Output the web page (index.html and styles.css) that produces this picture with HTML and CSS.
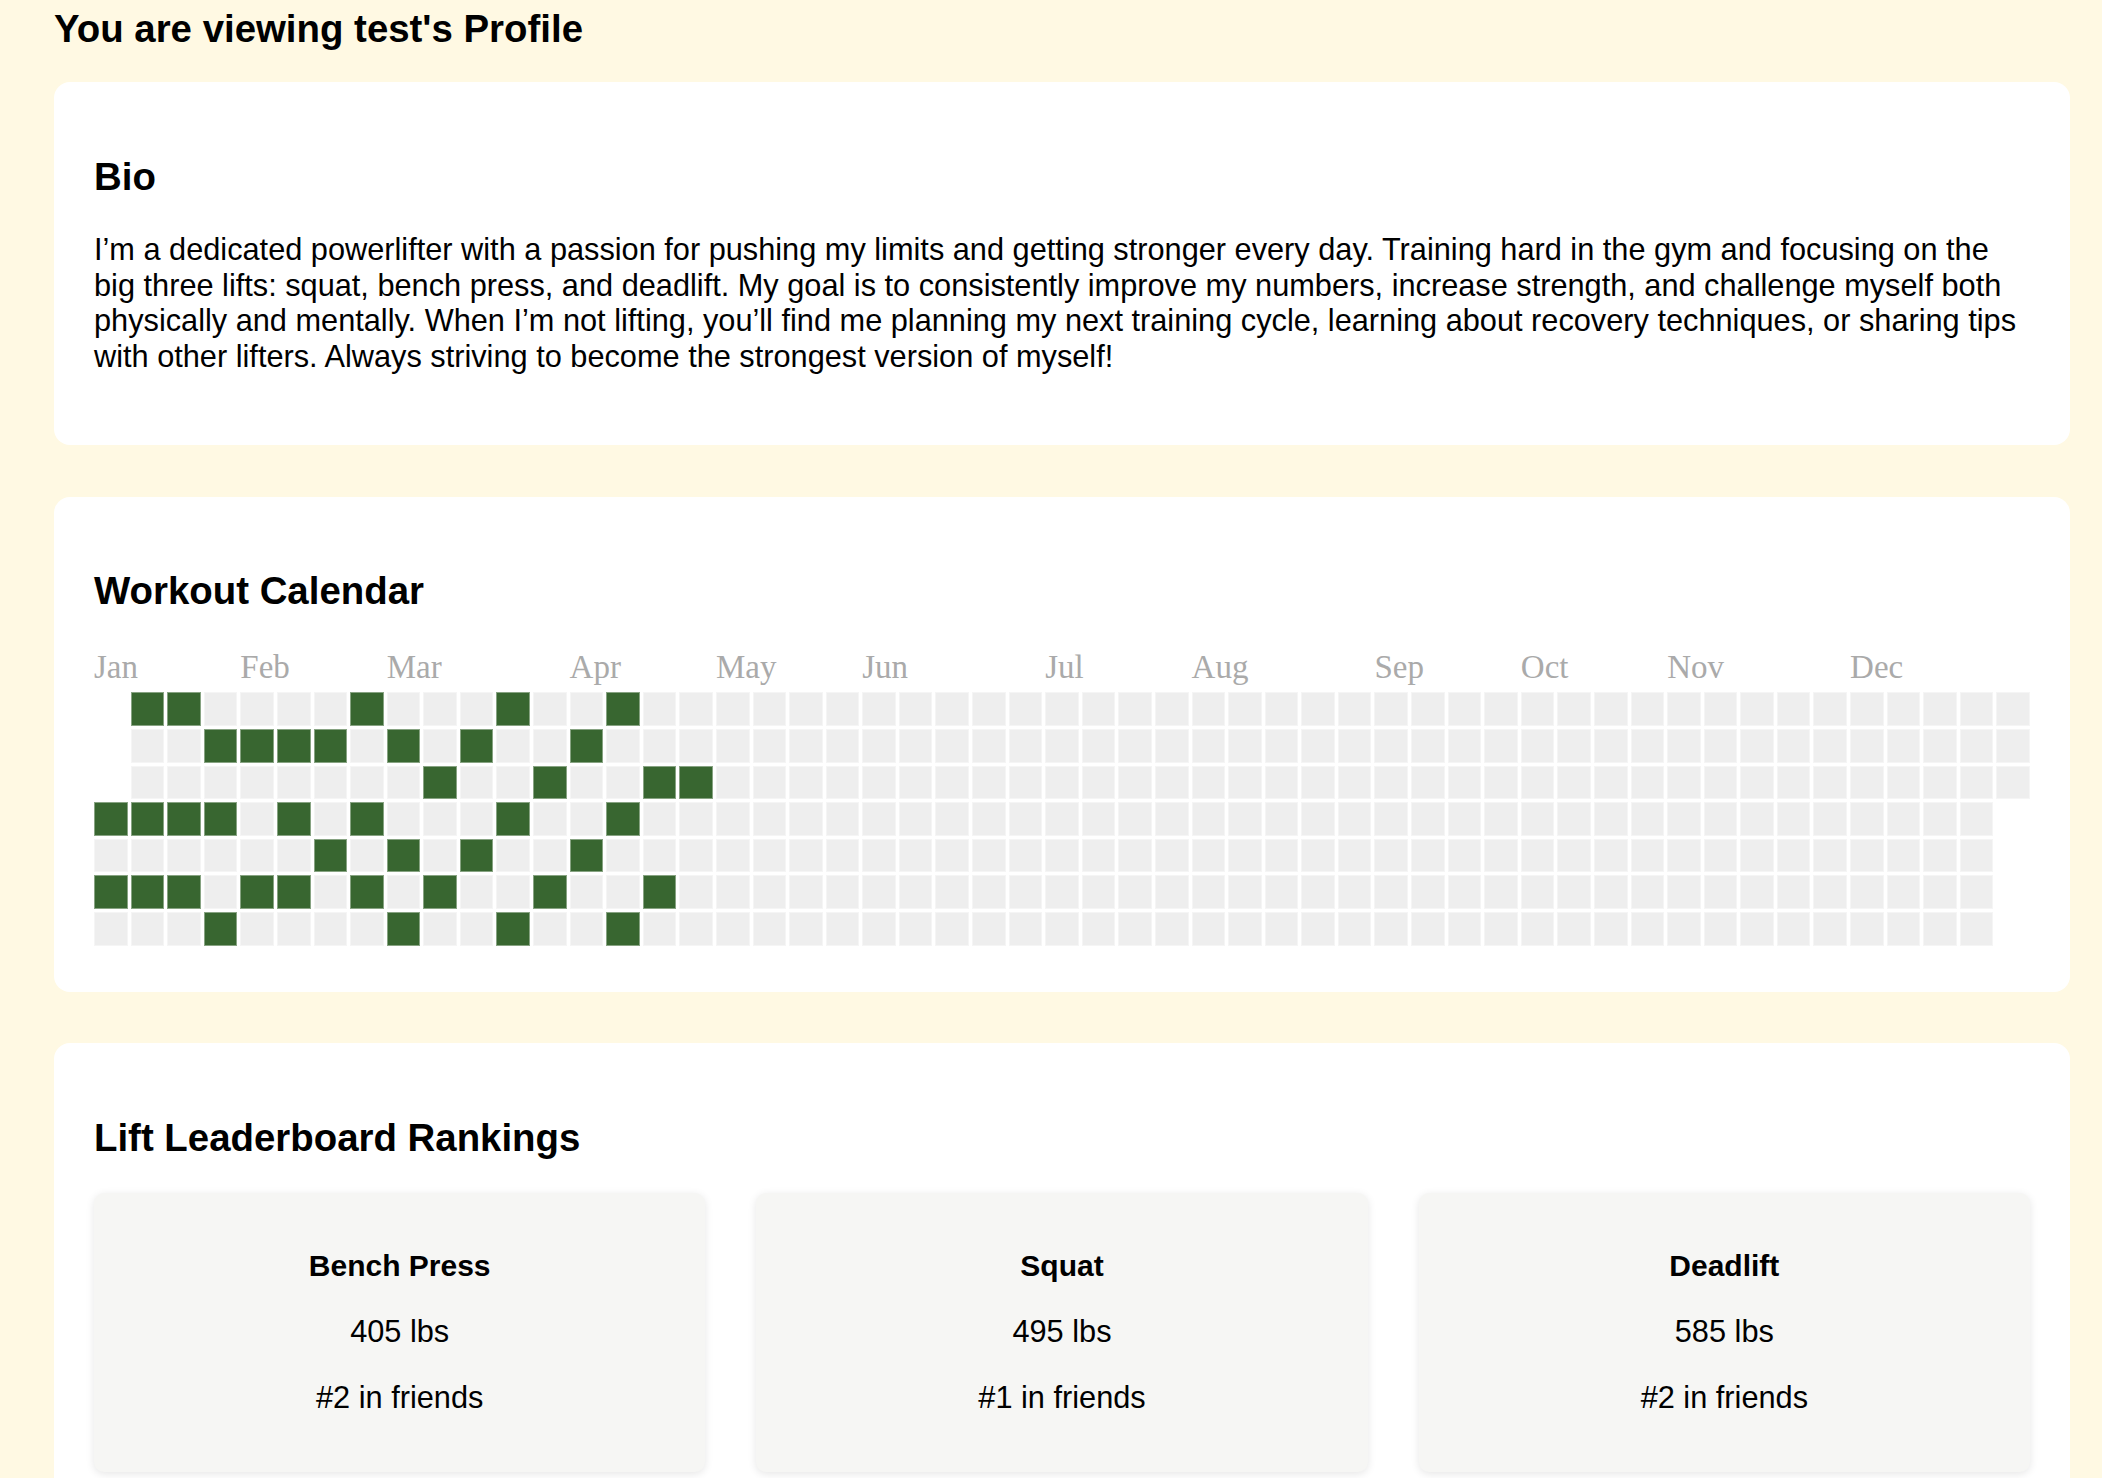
FILE: index.html
```html
<!DOCTYPE html>
<html lang="en">
<head>
<meta charset="utf-8">
<title>test's Profile</title>
<link rel="stylesheet" href="styles.css">
</head>
<body>
<div class="page">
  <h1 class="page-title">You are viewing test's Profile</h1>
  <div class="sections">
    <section class="card">
      <h2 class="card-title">Bio</h2>
      <p class="bio-text">I’m a dedicated powerlifter with a passion for pushing my limits and getting stronger every day. Training hard in the gym and focusing on the big three lifts: squat, bench press, and deadlift. My goal is to consistently improve my numbers, increase strength, and challenge myself both physically and mentally. When I’m not lifting, you’ll find me planning my next training cycle, learning about recovery techniques, or sharing tips with other lifters. Always striving to become the strongest version of myself!</p>
    </section>

    <section class="card card-calendar">
      <h2 class="card-title">Workout Calendar</h2>
      <div class="months">
        <span class="month m-jan">Jan</span>
        <span class="month m-feb">Feb</span>
        <span class="month m-mar">Mar</span>
        <span class="month m-apr">Apr</span>
        <span class="month m-may">May</span>
        <span class="month m-jun">Jun</span>
        <span class="month m-jul">Jul</span>
        <span class="month m-aug">Aug</span>
        <span class="month m-sep">Sep</span>
        <span class="month m-oct">Oct</span>
        <span class="month m-nov">Nov</span>
        <span class="month m-dec">Dec</span>
      </div>
      <div class="cal">
<i class="day blank"></i><i class="day blank"></i><i class="day blank"></i><i class="day on"></i><i class="day"></i><i class="day on"></i><i class="day"></i>
<i class="day on"></i><i class="day"></i><i class="day"></i><i class="day on"></i><i class="day"></i><i class="day on"></i><i class="day"></i>
<i class="day on"></i><i class="day"></i><i class="day"></i><i class="day on"></i><i class="day"></i><i class="day on"></i><i class="day"></i>
<i class="day"></i><i class="day on"></i><i class="day"></i><i class="day on"></i><i class="day"></i><i class="day"></i><i class="day on"></i>
<i class="day"></i><i class="day on"></i><i class="day"></i><i class="day"></i><i class="day"></i><i class="day on"></i><i class="day"></i>
<i class="day"></i><i class="day on"></i><i class="day"></i><i class="day on"></i><i class="day"></i><i class="day on"></i><i class="day"></i>
<i class="day"></i><i class="day on"></i><i class="day"></i><i class="day"></i><i class="day on"></i><i class="day"></i><i class="day"></i>
<i class="day on"></i><i class="day"></i><i class="day"></i><i class="day on"></i><i class="day"></i><i class="day on"></i><i class="day"></i>
<i class="day"></i><i class="day on"></i><i class="day"></i><i class="day"></i><i class="day on"></i><i class="day"></i><i class="day on"></i>
<i class="day"></i><i class="day"></i><i class="day on"></i><i class="day"></i><i class="day"></i><i class="day on"></i><i class="day"></i>
<i class="day"></i><i class="day on"></i><i class="day"></i><i class="day"></i><i class="day on"></i><i class="day"></i><i class="day"></i>
<i class="day on"></i><i class="day"></i><i class="day"></i><i class="day on"></i><i class="day"></i><i class="day"></i><i class="day on"></i>
<i class="day"></i><i class="day"></i><i class="day on"></i><i class="day"></i><i class="day"></i><i class="day on"></i><i class="day"></i>
<i class="day"></i><i class="day on"></i><i class="day"></i><i class="day"></i><i class="day on"></i><i class="day"></i><i class="day"></i>
<i class="day on"></i><i class="day"></i><i class="day"></i><i class="day on"></i><i class="day"></i><i class="day"></i><i class="day on"></i>
<i class="day"></i><i class="day"></i><i class="day on"></i><i class="day"></i><i class="day"></i><i class="day on"></i><i class="day"></i>
<i class="day"></i><i class="day"></i><i class="day on"></i><i class="day"></i><i class="day"></i><i class="day"></i><i class="day"></i>
<i class="day"></i><i class="day"></i><i class="day"></i><i class="day"></i><i class="day"></i><i class="day"></i><i class="day"></i>
<i class="day"></i><i class="day"></i><i class="day"></i><i class="day"></i><i class="day"></i><i class="day"></i><i class="day"></i>
<i class="day"></i><i class="day"></i><i class="day"></i><i class="day"></i><i class="day"></i><i class="day"></i><i class="day"></i>
<i class="day"></i><i class="day"></i><i class="day"></i><i class="day"></i><i class="day"></i><i class="day"></i><i class="day"></i>
<i class="day"></i><i class="day"></i><i class="day"></i><i class="day"></i><i class="day"></i><i class="day"></i><i class="day"></i>
<i class="day"></i><i class="day"></i><i class="day"></i><i class="day"></i><i class="day"></i><i class="day"></i><i class="day"></i>
<i class="day"></i><i class="day"></i><i class="day"></i><i class="day"></i><i class="day"></i><i class="day"></i><i class="day"></i>
<i class="day"></i><i class="day"></i><i class="day"></i><i class="day"></i><i class="day"></i><i class="day"></i><i class="day"></i>
<i class="day"></i><i class="day"></i><i class="day"></i><i class="day"></i><i class="day"></i><i class="day"></i><i class="day"></i>
<i class="day"></i><i class="day"></i><i class="day"></i><i class="day"></i><i class="day"></i><i class="day"></i><i class="day"></i>
<i class="day"></i><i class="day"></i><i class="day"></i><i class="day"></i><i class="day"></i><i class="day"></i><i class="day"></i>
<i class="day"></i><i class="day"></i><i class="day"></i><i class="day"></i><i class="day"></i><i class="day"></i><i class="day"></i>
<i class="day"></i><i class="day"></i><i class="day"></i><i class="day"></i><i class="day"></i><i class="day"></i><i class="day"></i>
<i class="day"></i><i class="day"></i><i class="day"></i><i class="day"></i><i class="day"></i><i class="day"></i><i class="day"></i>
<i class="day"></i><i class="day"></i><i class="day"></i><i class="day"></i><i class="day"></i><i class="day"></i><i class="day"></i>
<i class="day"></i><i class="day"></i><i class="day"></i><i class="day"></i><i class="day"></i><i class="day"></i><i class="day"></i>
<i class="day"></i><i class="day"></i><i class="day"></i><i class="day"></i><i class="day"></i><i class="day"></i><i class="day"></i>
<i class="day"></i><i class="day"></i><i class="day"></i><i class="day"></i><i class="day"></i><i class="day"></i><i class="day"></i>
<i class="day"></i><i class="day"></i><i class="day"></i><i class="day"></i><i class="day"></i><i class="day"></i><i class="day"></i>
<i class="day"></i><i class="day"></i><i class="day"></i><i class="day"></i><i class="day"></i><i class="day"></i><i class="day"></i>
<i class="day"></i><i class="day"></i><i class="day"></i><i class="day"></i><i class="day"></i><i class="day"></i><i class="day"></i>
<i class="day"></i><i class="day"></i><i class="day"></i><i class="day"></i><i class="day"></i><i class="day"></i><i class="day"></i>
<i class="day"></i><i class="day"></i><i class="day"></i><i class="day"></i><i class="day"></i><i class="day"></i><i class="day"></i>
<i class="day"></i><i class="day"></i><i class="day"></i><i class="day"></i><i class="day"></i><i class="day"></i><i class="day"></i>
<i class="day"></i><i class="day"></i><i class="day"></i><i class="day"></i><i class="day"></i><i class="day"></i><i class="day"></i>
<i class="day"></i><i class="day"></i><i class="day"></i><i class="day"></i><i class="day"></i><i class="day"></i><i class="day"></i>
<i class="day"></i><i class="day"></i><i class="day"></i><i class="day"></i><i class="day"></i><i class="day"></i><i class="day"></i>
<i class="day"></i><i class="day"></i><i class="day"></i><i class="day"></i><i class="day"></i><i class="day"></i><i class="day"></i>
<i class="day"></i><i class="day"></i><i class="day"></i><i class="day"></i><i class="day"></i><i class="day"></i><i class="day"></i>
<i class="day"></i><i class="day"></i><i class="day"></i><i class="day"></i><i class="day"></i><i class="day"></i><i class="day"></i>
<i class="day"></i><i class="day"></i><i class="day"></i><i class="day"></i><i class="day"></i><i class="day"></i><i class="day"></i>
<i class="day"></i><i class="day"></i><i class="day"></i><i class="day"></i><i class="day"></i><i class="day"></i><i class="day"></i>
<i class="day"></i><i class="day"></i><i class="day"></i><i class="day"></i><i class="day"></i><i class="day"></i><i class="day"></i>
<i class="day"></i><i class="day"></i><i class="day"></i><i class="day"></i><i class="day"></i><i class="day"></i><i class="day"></i>
<i class="day"></i><i class="day"></i><i class="day"></i><i class="day"></i><i class="day"></i><i class="day"></i><i class="day"></i>
<i class="day"></i><i class="day"></i><i class="day"></i>
      </div>
    </section>

    <section class="card">
      <h2 class="card-title">Lift Leaderboard Rankings</h2>
      <div class="lifts">
        <div class="lift">
          <h3 class="lift-name">Bench Press</h3>
          <p class="lift-stat">405 lbs</p>
          <p class="lift-stat">#2 in friends</p>
        </div>
        <div class="lift">
          <h3 class="lift-name">Squat</h3>
          <p class="lift-stat">495 lbs</p>
          <p class="lift-stat">#1 in friends</p>
        </div>
        <div class="lift">
          <h3 class="lift-name">Deadlift</h3>
          <p class="lift-stat">585 lbs</p>
          <p class="lift-stat">#2 in friends</p>
        </div>
      </div>
    </section>
  </div>
</div>
</body>
</html>
```

FILE: styles.css
```css
* {
  box-sizing: border-box;
}

body {
  margin: 0;
  background: #fff9e3;
  color: #000;
  font-family: "Liberation Sans", Arial, Helvetica, sans-serif;
  font-size: 30.72px;
}

.page {
  padding: 6px 32px 0 54px;
}

.page-title {
  font-size: 38.4px;
  font-weight: bold;
  line-height: 1.2;
  margin: 0 0 30px;
}

.sections {
  display: flex;
  flex-direction: column;
  gap: 51.5px;
}

.card {
  background: #fff;
  border-radius: 16px;
  padding: 40px;
}

.card-title {
  font-size: 38.4px;
  font-weight: bold;
  line-height: 1.2;
  margin: 31.9px 0;
}

.bio-text {
  margin: 30.72px 0;
  line-height: 35.6px;
}

.months {
  display: grid;
  grid-template-columns: repeat(53, minmax(0, 1fr));
  column-gap: 3px;
  height: 46px;
  line-height: 43.6px;
  font-family: "Liberation Serif", "Times New Roman", serif;
  font-size: 33px;
  color: #aaaaaa;
}

.month {
  white-space: nowrap;
  grid-row: 1;
}

.m-jan { grid-column-start: 1; }
.m-feb { grid-column-start: 5; }
.m-mar { grid-column-start: 9; }
.m-apr { grid-column-start: 14; }
.m-may { grid-column-start: 18; }
.m-jun { grid-column-start: 22; }
.m-jul { grid-column-start: 27; }
.m-aug { grid-column-start: 31; }
.m-sep { grid-column-start: 36; }
.m-oct { grid-column-start: 40; }
.m-nov { grid-column-start: 44; }
.m-dec { grid-column-start: 49; }

.cal {
  display: grid;
  grid-template-columns: repeat(53, minmax(0, 1fr));
  grid-template-rows: repeat(7, 33.6px);
  grid-auto-flow: column;
  gap: 3px;
  margin-bottom: 6px;
}

.day {
  display: block;
  background: #eeeeee;
  border: 1px solid rgba(255, 255, 255, 0.4);
}

.day.on {
  background: #386630;
}

.day.blank {
  visibility: hidden;
}

.lifts {
  display: grid;
  grid-template-columns: repeat(3, minmax(0, 1fr));
  gap: 51px;
}

.lift {
  background: #f6f6f4;
  border-radius: 10px;
  box-shadow: 0 2px 8px rgba(0, 0, 0, 0.1);
  padding: 26px;
  text-align: center;
}

.lift-name {
  font-size: 30px;
  font-weight: bold;
  line-height: normal;
  margin: 30px 0;
}

.lift-stat {
  margin: 30.72px 0;
  line-height: 35.6px;
}
```
